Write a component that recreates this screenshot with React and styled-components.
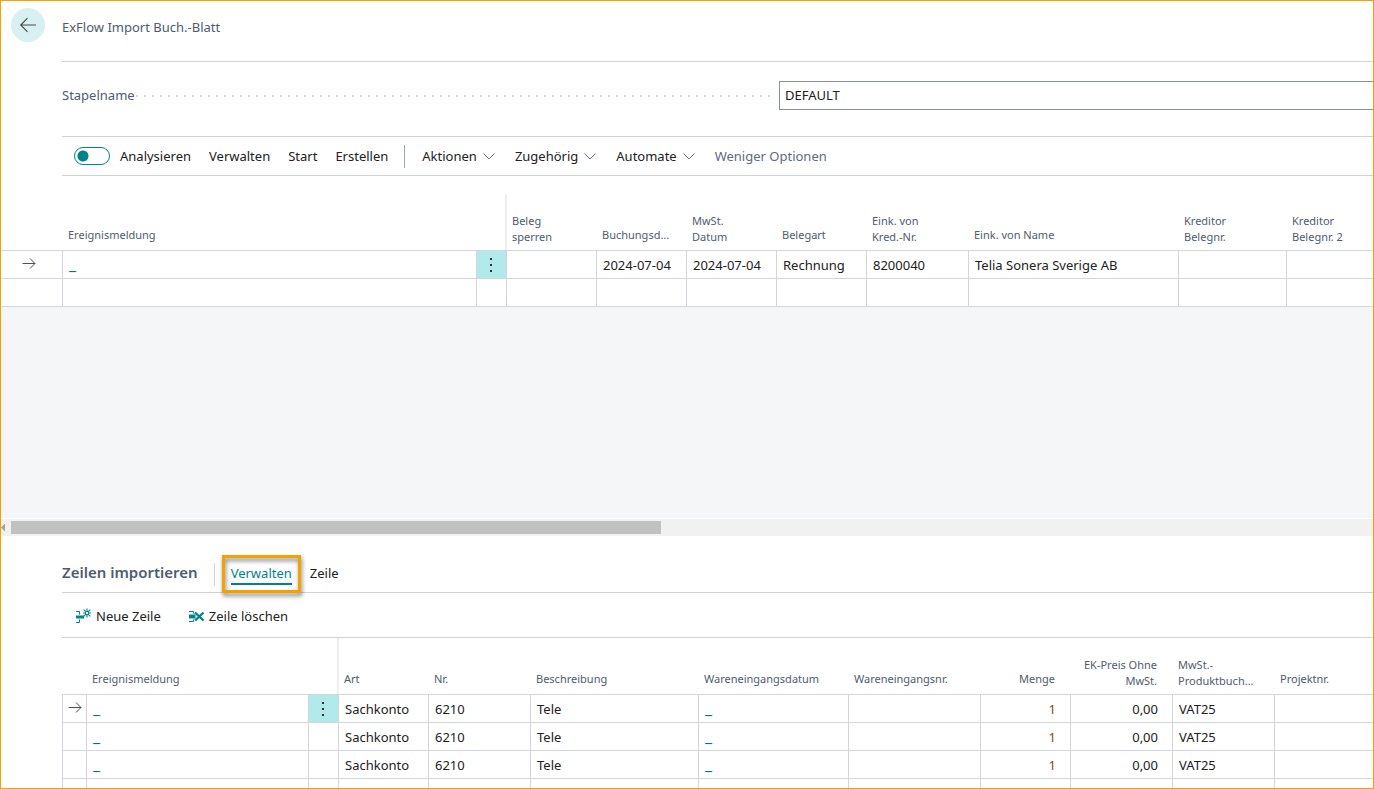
import React from 'react'
import styled, { createGlobalStyle } from 'styled-components'

const GlobalStyle = createGlobalStyle`
    * {
        box-sizing: border-box;
    }
    body {
        margin: 0;
        background: #fff;
        color: #212121;
        font: 13px/20px 'Noto Sans', 'Open Sans', sans-serif;
    }
    button, input {
        font: inherit;
        color: inherit;
    }
`

const Page = styled.div`
    display: flex;
    flex-direction: column;
    height: 100vh;
    overflow: hidden;
    border: 1px solid #f5a100;
`

const Header = styled.header`
    display: flex;
    align-items: flex-start;
    height: 60px;
    flex-shrink: 0;
    padding: 7px 0 0 10px;
`

const BackButton = styled.button`
    display: flex;
    align-items: center;
    justify-content: center;
    width: 34px;
    height: 34px;
    padding: 0;
    border: 0;
    border-radius: 50%;
    background: #d8f0f2;
`

const Title = styled.h1`
    margin: 9px 0 0 17px;
    color: #505c6d;
    font-size: 13px;
    font-weight: 400;
    line-height: 20px;
`

const Field = styled.div`
    display: flex;
    align-items: center;
    flex-shrink: 0;
    height: 75px;
    margin-left: 61px;
    padding-bottom: 8px;
    border-top: 1px solid #d0d3d6;
`

const FieldLabel = styled.label`
    display: flex;
    align-items: center;
    width: 717px;
    padding-right: 9px;
    color: #505c6d;
`

const Dots = styled.span`
    flex: 1;
    height: 2px;
    margin-top: 2px;
    background: repeating-linear-gradient(to left, #d9dbde 0 2px, transparent 2px 8px);
`

const FieldInput = styled.input`
    flex: 1;
    min-width: 0;
    height: 29px;
    padding: 0 5px;
    border: 1px solid #8791a0;
    border-right: 0;
    border-radius: 0;
    outline: 0;
`

const ActionBar = styled.nav`
    display: flex;
    align-items: center;
    flex-shrink: 0;
    height: 40px;
    margin-left: 61px;
    padding-left: 12px;
    border-top: 1px solid #d0d3d6;
    border-bottom: 1px solid #d0d3d6;
`

const ActionGroup = styled.div`
    display: flex;
    align-items: center;
    gap: ${props => props.$gap}px;
`

const ToggleLabel = styled.label`
    display: flex;
    align-items: center;
    gap: 10px;
`

const Toggle = styled.input`
    appearance: none;
    width: 36px;
    height: 18px;
    margin: 0;
    border: 1px solid #00838a;
    border-radius: 9px;
    background: radial-gradient(circle at 8px 8px, #00838a 5px, transparent 6px);
`

const Action = styled.button`
    display: flex;
    align-items: center;
    gap: ${props => (props.$icon ? 4 : 6)}px;
    padding: 0;
    border: 0;
    background: none;
    color: ${props => (props.$muted ? '#606b7c' : '#212121')};
`

const Divider = styled.span`
    width: 1px;
    height: 23px;
    margin: 0 ${props => (props.$wide ? 17 : 0)}px 0 16px;
    background: ${props => (props.$wide ? '#a0a8b4' : '#d0d3d6')};
`

const Grid = styled.table`
    width: 100%;
    flex-shrink: 0;
    table-layout: fixed;
    border-collapse: separate;
    border-spacing: 0;
`

const HeadCell = styled.th`
    height: ${props => props.$height}px;
    padding: 0 ${props => (props.$right ? 15 : 0)}px 5px 6px;
    border-bottom: 1px solid #d2d5da;
    color: #505c6d;
    font-size: 11px;
    font-weight: 400;
    line-height: ${props => (props.$twoLines ? 16 : 20)}px;
    text-align: ${props => (props.$right ? 'right' : 'left')};
    vertical-align: bottom;
    white-space: pre;
    background: ${props => (props.$edge
        ? `linear-gradient(#eceef0, #eceef0) ${props.$edge} bottom / 1px 56px no-repeat`
        : 'none')};
`

const Cell = styled.td`
    height: 28px;
    padding: 0 ${props => (props.$right ? 14 : 0)}px 0 6px;
    border-left: 1px solid #d2d5da;
    border-bottom: 1px solid #d2d5da;
    line-height: 20px;
    text-align: ${props => (props.$right ? 'right' : 'left')};
    white-space: nowrap;
    color: ${props => (props.$accent ? '#8a4b10' : '#212121')};
`

const MarkerCell = styled(Cell)`
    padding: 0 ${props => (props.$bare ? 6 : 0)}px 0 0;
    border-left-color: ${props => (props.$bare ? 'transparent' : '#d2d5da')};
    text-align: center;
`

const MenuCell = styled(Cell)`
    padding: 0;
    background: ${props => (props.$active ? '#b2e9eb' : 'none')};
`

const MenuButton = styled.button`
    display: flex;
    align-items: center;
    justify-content: center;
    width: 100%;
    height: 27px;
    padding: 0 1px 0 0;
    border: 0;
    background: none;
`

const CellLink = styled.a`
    color: #00757c;
    font-size: 16px;
    line-height: 16px;
    text-decoration: none;
`

const GridFiller = styled.div`
    flex-shrink: 0;
    height: 212px;
    background: #f5f6f8;
    border-bottom: 1px solid #fff;
`

const ScrollTrack = styled.div`
    display: flex;
    align-items: center;
    flex-shrink: 0;
    height: 17px;
    background: #f1f1f1;
`

const ScrollArrow = styled.span`
    width: 10px;
    height: 8px;
    background: #a3a3a3;
    clip-path: polygon(0 50%, 4px 0, 4px 100%);
`

const ScrollThumb = styled.div`
    width: 650px;
    height: 13px;
    background: #c1c1c1;
`

const PartHeader = styled.div`
    display: flex;
    align-items: center;
    flex-shrink: 0;
    height: 57px;
    margin-left: 61px;
    padding-top: 20px;
    border-bottom: 1px solid #d0d3d6;
`

const PartTitle = styled.h2`
    margin: 0 0 4px;
    color: #505c6d;
    font-size: 15px;
    font-weight: 600;
    line-height: 20px;
`

const Tab = styled.button`
    position: relative;
    height: 22px;
    margin-left: ${props => (props.$active ? 16 : 18)}px;
    padding: 0;
    border: 0;
    border-bottom: 2px solid ${props => (props.$active ? '#00838a' : 'transparent')};
    background: none;
    color: ${props => (props.$active ? '#00838a' : '#212121')};
    line-height: 20px;
`

// frame that points the reader at the tab
const Callout = styled.span`
    position: absolute;
    inset: -8px -9px -10px;
    border: 3px solid #f5a100;
    filter: drop-shadow(1px 3px 2px rgba(0, 0, 0, 0.5));
`

const PartActions = styled.div`
    display: flex;
    align-items: center;
    flex-shrink: 0;
    gap: 27px;
    height: 45px;
    margin-left: 61px;
    padding: 1px 0 0 13px;
    border-bottom: 1px solid #d0d3d6;
`

const PartGrid = styled.div`
    flex: 1;
    min-height: 0;
    margin-left: 61px;
    overflow: hidden;
`

const ArrowLeft = () => (
    <svg width='18' height='16' viewBox='0 0 18 16' fill='none' stroke='#484848' strokeWidth='1.1'>
        <path d='M17 8H1.5M8.5 1.2L1.7 8l6.8 6.8' />
    </svg>
)

const RowArrow = () => (
    <svg width='14' height='12' viewBox='0 0 14 12' fill='none' stroke='#505050'>
        <path d='M0.5 5.5H13M8 0.5l5 5-5 5' />
    </svg>
)

const Chevron = () => (
    <svg width='12' height='8' viewBox='0 0 12 8' fill='none' stroke='#707070'>
        <path d='M0.5 1.5L6 7 11.5 1.5' />
    </svg>
)

const Dots3 = () => (
    <svg width='2' height='14' viewBox='0 0 2 14' fill='#303030'>
        <path d='M0 0h2v2H0zM0 6h2v2H0zM0 12h2v2H0z' />
    </svg>
)

const NewLineIcon = () => (
    <svg width='17' height='16' viewBox='0 0 17 16' fill='none' stroke='#00838a'>
        <path d='M1 3.5h3.5v3M1 14.5h3.5v-3' />
        <path d='M4 9h5M1 9h4' strokeWidth='3' />
        <path d='M10.5 3.5h3v3h-3z' />
        <path d='M12 0.5v3M12 6.5v3M8 5h2.5M13.5 5H16M8.7 1.7l2 2M15.3 1.7l-2 2M8.7 8.3l2-2M15.3 8.3l-2-2' strokeWidth='1.1' />
    </svg>
)

const DeleteLineIcon = () => (
    <svg width='17' height='16' viewBox='0 0 17 16' fill='none' stroke='#00838a'>
        <path d='M1 3.5h4.5v2M1 13.5h4.5v-2' />
        <path d='M1 8.5h6.5' strokeWidth='4' />
        <path d='M7 4.5l8.5 8M15.5 4.5l-8.5 8' strokeWidth='2.4' />
    </svg>
)

const journalColumns = [
    { width: 61, label: '' },
    { width: 414, label: 'Ereignismeldung' },
    { width: 30, label: '', edge: 'right' },
    { width: 90, label: 'Beleg\nsperren', edge: 'left' },
    { width: 90, label: 'Buchungsd...' },
    { width: 90, label: 'MwSt.\nDatum' },
    { width: 90, label: 'Belegart' },
    { width: 102, label: 'Eink. von\nKred.-Nr.' },
    { width: 210, label: 'Eink. von Name' },
    { width: 108, label: 'Kreditor\nBelegnr.' },
    { label: 'Kreditor\nBelegnr. 2' },
]

const journalRows = [
    ['', '2024-07-04', '2024-07-04', 'Rechnung', '8200040', 'Telia Sonera Sverige AB', '', ''],
    ['', '', '', '', '', '', '', ''],
]

const lineColumns = [
    { width: 24, label: '' },
    { width: 222, label: 'Ereignismeldung' },
    { width: 30, label: '', edge: 'right' },
    { width: 90, label: 'Art', edge: 'left' },
    { width: 102, label: 'Nr.' },
    { width: 168, label: 'Beschreibung' },
    { width: 150, label: 'Wareneingangsdatum' },
    { width: 132, label: 'Wareneingangsnr.' },
    { width: 90, label: 'Menge', right: true },
    { width: 102, label: 'EK-Preis Ohne\nMwSt.', right: true },
    { width: 102, label: 'MwSt.-\nProduktbuch...' },
    { label: 'Projektnr.' },
]

const lineRow = ['Sachkonto', '6210', 'Tele', '_', '', '1', '0,00', 'VAT25', '']
const lineRows = [lineRow, lineRow, lineRow, ['', '', '', '', '', '', '', '', '']]

const DataGrid = ({ columns, rows, headHeight, bare }) => (
    <Grid>
        <colgroup>
            {columns.map((column, i) => <col key={i} width={column.width} />)}
        </colgroup>
        <thead>
            <tr>
                {columns.map((column, i) => (
                    <HeadCell
                        key={i}
                        $height={headHeight}
                        $right={column.right}
                        $edge={column.edge}
                        $twoLines={column.label.includes('\n')}
                    >
                        {column.label}
                    </HeadCell>
                ))}
            </tr>
        </thead>
        <tbody>
            {rows.map((row, r) => (
                <tr key={r}>
                    <MarkerCell $bare={bare}>{r === 0 && <RowArrow />}</MarkerCell>
                    <Cell>{row[1] && <CellLink href='#meldung'>_</CellLink>}</Cell>
                    <MenuCell $active={r === 0}>
                        {r === 0 && <MenuButton aria-label='Weitere Optionen'><Dots3 /></MenuButton>}
                    </MenuCell>
                    {row.map((value, i) => (
                        <Cell key={i} $right={columns[i + 3].right} $accent={columns[i + 3].label === 'Menge'}>
                            {value === '_' ? <CellLink href='#datum'>_</CellLink> : value}
                        </Cell>
                    ))}
                </tr>
            ))}
        </tbody>
    </Grid>
)

const App = () => (
    <Page>
        <GlobalStyle />
        <Header>
            <BackButton aria-label='Zurück'><ArrowLeft /></BackButton>
            <Title>ExFlow Import Buch.-Blatt</Title>
        </Header>
        <Field>
            <FieldLabel htmlFor='batch'>Stapelname<Dots /></FieldLabel>
            <FieldInput id='batch' defaultValue='DEFAULT' />
        </Field>
        <ActionBar>
            <ActionGroup $gap={18}>
                <ToggleLabel>
                    <Toggle type='checkbox' />
                    Analysieren
                </ToggleLabel>
                <Action>Verwalten</Action>
                <Action>Start</Action>
                <Action>Erstellen</Action>
            </ActionGroup>
            <Divider $wide />
            <ActionGroup $gap={20}>
                <Action>Aktionen <Chevron /></Action>
                <Action>Zugehörig <Chevron /></Action>
                <Action>Automate <Chevron /></Action>
                <Action $muted>Weniger Optionen</Action>
            </ActionGroup>
        </ActionBar>
        <DataGrid columns={journalColumns} rows={journalRows} headHeight={75} bare />
        <GridFiller />
        <ScrollTrack>
            <ScrollArrow />
            <ScrollThumb />
        </ScrollTrack>
        <PartHeader>
            <PartTitle>Zeilen importieren</PartTitle>
            <Divider />
            <Tab $active>Verwalten<Callout /></Tab>
            <Tab>Zeile</Tab>
        </PartHeader>
        <PartActions>
            <Action $icon><NewLineIcon />Neue Zeile</Action>
            <Action $icon><DeleteLineIcon />Zeile löschen</Action>
        </PartActions>
        <PartGrid>
            <DataGrid columns={lineColumns} rows={lineRows} headHeight={57} />
        </PartGrid>
    </Page>
)

export default App
